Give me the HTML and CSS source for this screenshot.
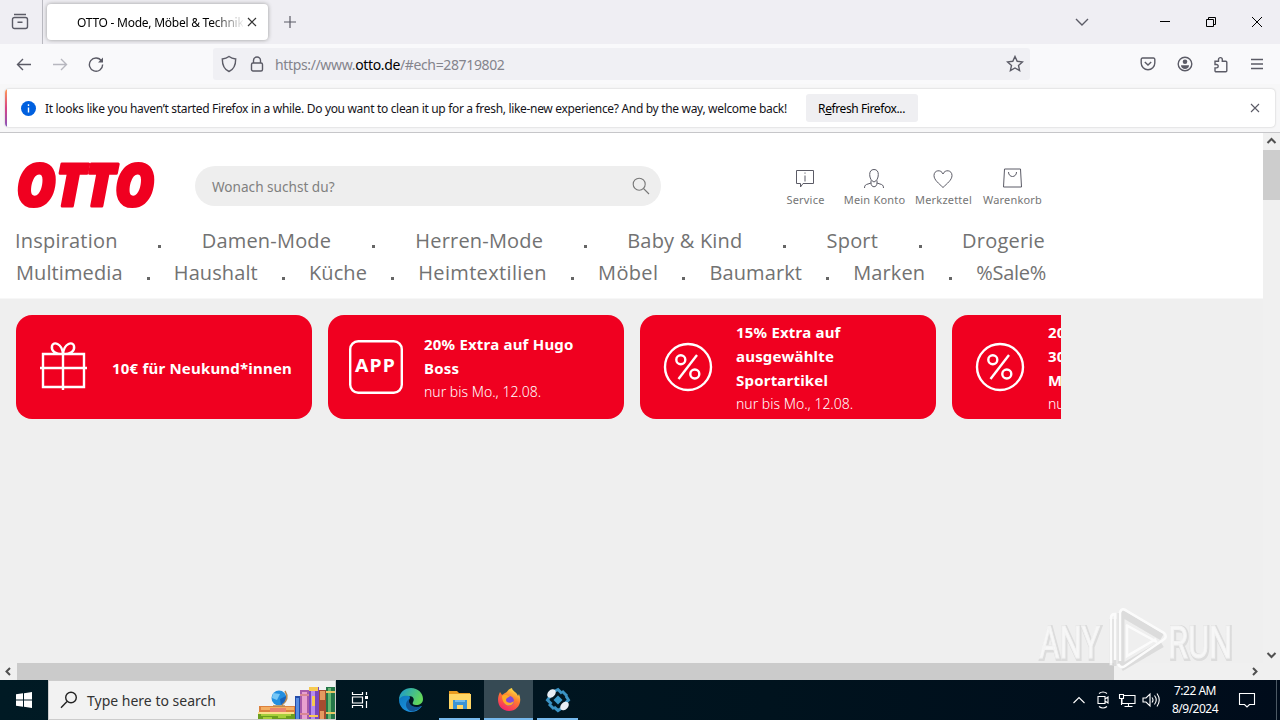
FILE: index.html
```html
<!DOCTYPE html>
<html lang="de">
<head>
<meta charset="utf-8">
<title>OTTO - Mode, Möbel &amp; Technik</title>
<link rel="stylesheet" href="styles.css">
</head>
<body>
<div class="screen">
  <div class="tabs">
    <div class="view"><svg width="18" height="18" viewBox="0 0 18 18"><path d="M3 1.500h12M3.500 4.500h11a2 2 0 0 1 2 2v7a2 2 0 0 1-2 2h-11a2 2 0 0 1-2-2v-7a2 2 0 0 1 2-2zM6.500 9.200h5"/></svg></div>
    <div class="tab"><span class="tab-title">OTTO - Mode, Möbel &amp; Technik</span><svg width="10" height="10" viewBox="0 0 10 10"><path d="M1 1l8 8M9 1L1 9"/></svg></div>
    <svg class="plus" width="14" height="14" viewBox="0 0 14 14"><path d="M7 1v12M1 7h12"/></svg>
    <div class="window-buttons">
      <svg width="14" height="12" viewBox="0 0 14 12"><path d="M1 3l6 6 6-6"/></svg>
      <svg class="dark min" width="12" height="12" viewBox="0 0 12 12"><path d="M1 5.500h10"/></svg>
      <svg class="dark" width="12" height="12" viewBox="0 0 12 12"><path d="M1.500 3.500h7v7h-7zM3.500 3.500v-2h7v7h-2"/></svg>
      <svg class="dark" width="12" height="12" viewBox="0 0 12 12"><path d="M1 1l10 10M11 1L1 11"/></svg>
    </div>
  </div>
  <div class="toolbar">
    <div class="nav-buttons">
      <svg width="16" height="16" viewBox="0 0 16 16"><path d="M15 8.500H1.500M7 3L1.500 8.500 7 14"/></svg>
      <svg class="off" width="16" height="16" viewBox="0 0 16 16"><path d="M1 8.500h13.500M9 3l5.500 5.500L9 14"/></svg>
      <svg width="16" height="16" viewBox="0 0 16 16"><path d="M13.500 5A6.600 6.600 0 1 0 14.600 8.500"/><path class="fill" d="M15 1.500v5H10z"/></svg>
    </div>
    <div class="urlbar">
      <svg width="16" height="18" viewBox="0 0 16 18"><path d="M8 1.500c2 1.600 4.300 2.300 6.700 2.500 0 6-2 10.500-6.700 12.500C3.300 14.500 1.300 10 1.300 4 3.700 3.800 6 3.100 8 1.500z"/></svg>
      <svg width="14" height="16" viewBox="0 0 14 16"><rect x="1.500" y="7" width="11" height="8" rx="1.500"/><path d="M3.500 7V4.500a3.500 3.500 0 0 1 7 0V7"/></svg>
      <span class="url">https://www.<b>otto.de</b>/#ech=28719802</span>
      <svg width="18" height="18" viewBox="0 0 18 18"><path d="M9 1.500l2.200 4.800 5.200.6-3.900 3.500 1.100 5.200L9 13l-4.600 2.600 1.100-5.200L1.600 6.900l5.200-.6z"/></svg>
    </div>
    <div class="tools">
      <svg width="16" height="16" viewBox="0 0 16 16"><path d="M2.500 2h11a1.300 1.300 0 0 1 1.300 1.300V7a6.800 6.800 0 0 1-13.600 0V3.300A1.300 1.300 0 0 1 2.500 2zM4.800 6L8 9l3.200-3"/></svg>
      <svg width="16" height="16" viewBox="0 0 16 16"><circle cx="8" cy="8" r="6.800"/><circle class="fill" cx="8" cy="5.800" r="2.300"/><path class="fill" d="M4 9.300h8c0 5-8 5-8 0z"/></svg>
      <svg width="16" height="17" viewBox="0 0 16 17"><path d="M2 5.200h3.500V3.500a1.900 1.900 0 0 1 3.800 0v1.700h3.500a1 1 0 0 1 1 1v8.500a1 1 0 0 1-1 1H3a1 1 0 0 1-1-1v-2.800h1.500a1.700 1.700 0 0 0 0-3.400H2z"/></svg>
      <svg width="14" height="14" viewBox="0 0 14 14"><path d="M1 2.500h12M1 7h12M1 11.500h12"/></svg>
    </div>
  </div>
  <div class="notice-wrap">
    <div class="notice">
      <i class="stripe"></i>
      <svg class="info" width="15" height="15" viewBox="0 0 15 15"><circle cx="7.500" cy="7.500" r="7.500"/><path d="M7.500 6.500v5M7.500 3.300v1.600"/></svg>
      <span class="message">It looks like you haven’t started Firefox in a while. Do you want to clean it up for a fresh, like-new experience? And by the way, welcome back!</span>
      <span class="refresh">R<u>e</u>fresh Firefox...</span>
      <svg class="dismiss" width="10" height="10" viewBox="0 0 10 10"><path d="M1 1l8 8M9 1L1 9"/></svg>
    </div>
  </div>
  <div class="viewport">
    <main class="page">
      <header class="header">
        <div class="top">
          <svg class="logo" width="144" height="60" viewBox="0 0 144 60"><text x="2.500" y="50" textLength="138" lengthAdjust="spacingAndGlyphs">OTTO</text></svg>
          <div class="search"><span>Wonach suchst du?</span><svg width="18" height="18" viewBox="0 0 18 18"><circle cx="7.200" cy="7.200" r="6"/><path d="M11.500 11.500l5.500 5.500"/></svg></div>
          <div class="actions">
            <div class="action service"><svg width="22" height="22" viewBox="0 0 22 22"><path d="M2.500 3.500h17v13H9L6.500 20v-3.500h-4zM11 8.500v6M11 5.500v1.200"/></svg><span>Service</span></div>
            <div class="action account"><svg width="22" height="22" viewBox="0 0 22 22"><path d="M11 2.500c-3 0-4.300 2-4.300 5 0 3.500 1.500 6.500 4.300 7.500 2.800-1 4.300-4 4.300-7.500 0-3-1.300-5-4.300-5zM1.500 21c0-3 1.500-3.500 3.500-4l3-1v-2.500M20.500 21c0-3-1.500-3.500-3.500-4l-3-1v-2.500M8 16c0 5 6 5 6 0"/></svg><span>Mein Konto</span></div>
            <div class="action wish"><svg width="22" height="22" viewBox="0 0 22 22"><path d="M11 20.500C7 16.500 2 13 2 8.500c0-5.500 7-6.500 9-1.500 2-5 9-4 9 1.500 0 4.500-5 8-9 12z"/></svg><span>Merkzettel</span></div>
            <div class="action cart"><svg width="22" height="22" viewBox="0 0 22 22"><path d="M3.500 2h16l1 18h-18zM7.500 5c0 6 8 6 8 0"/></svg><span>Warenkorb</span></div>
          </div>
        </div>
        <nav class="menu first"><span>Inspiration</span><i></i><span>Damen-Mode</span><i></i><span>Herren-Mode</span><i></i><span>Baby &amp; Kind</span><i></i><span>Sport</span><i></i><span>Drogerie</span></nav>
        <nav class="menu"><span>Multimedia</span><i></i><span>Haushalt</span><i></i><span>Küche</span><i></i><span class="wide">Heimtextilien</span><i></i><span class="wide">Möbel</span><i></i><span>Baumarkt</span><i></i><span>Marken</span><i></i><span class="sale">%Sale%</span></nav>
      </header>
      <section class="promos">
        <article class="promo"><svg width="56" height="56" viewBox="0 0 56 56"><path d="M7 15h41v33H7zM4 29h47M27 15v36M27 15C19 15 15 12 16 7c1-5 10-3 11 8 1-11 10-13 11-8 1 5-3 8-11 8"/></svg><div class="copy"><b>10€ für Neukund*innen</b></div></article>
        <article class="promo"><svg width="56" height="56" viewBox="0 0 56 56"><rect x="2.200" y="2.200" width="51.600" height="51.600" rx="8"/><text x="7" y="32.500" textLength="41" lengthAdjust="spacingAndGlyphs">APP</text></svg><div class="copy"><b>20% Extra auf Hugo Boss</b><span>nur bis Mo., 12.08.</span></div></article>
        <article class="promo"><svg width="56" height="56" viewBox="0 0 56 56"><circle cx="28" cy="28" r="23"/><circle cx="20.800" cy="20.800" r="4.500"/><circle cx="34.800" cy="35" r="4.500"/><path d="M37 16L18.500 40"/></svg><div class="copy"><b>15% Extra auf ausgewählte Sportartikel</b><span>nur bis Mo., 12.08.</span></div></article>
        <article class="promo"><svg width="56" height="56" viewBox="0 0 56 56"><circle cx="28" cy="28" r="23"/><circle cx="20.800" cy="20.800" r="4.500"/><circle cx="34.800" cy="35" r="4.500"/><path d="M37 16L18.500 40"/></svg><div class="copy"><b>20%<br>30%<br>Mode</b><span>nur bis Mo.</span></div></article>
      </section>
    </main>
    <div class="vscroll">
      <svg width="17" height="17" viewBox="0 0 17 17"><path d="M4.500 10l4-4 4 4"/></svg><div class="vthumb"></div>
      <svg width="17" height="17" viewBox="0 0 17 17"><path d="M4.500 7l4 4 4-4"/></svg>
    </div>
  </div>
  <div class="hscroll">
    <svg width="17" height="17" viewBox="0 0 17 17"><path d="M10 5L6.500 8.500 10 12"/></svg><div class="hthumb"></div>
    <svg class="right" width="17" height="17" viewBox="0 0 17 17"><path d="M6 5l3.500 3.500L6 12"/></svg>
  </div>
  <div class="taskbar">
    <div class="start"><svg width="16" height="16" viewBox="0 0 16 16"><path d="M0 2.300l7-1v6.200H0zM8 1.200L16 0v7.500H8zM0 8.500h7v6.300l-7-1zM8 8.500h8V16l-8-1.200z"/></svg></div>
    <div class="tasksearch">
      <svg class="lens" width="18" height="18" viewBox="0 0 18 18"><circle cx="11" cy="6.500" r="5.300"/><path d="M7 10.500L1 16.800"/></svg>
      <span>Type here to search</span>
      <svg class="books" width="77" height="38" viewBox="0 0 77 38">
        <path fill="#6b9f1e" d="M0 33h37v5H0z"/><path fill="#a7cf3a" d="M3 33h30v2H3zM5 36h9v2H5zM20 35h8v2h-8z"/><path fill="#dc813e" d="M1 25h36v8H1z"/><path fill="#f4ae62" d="M3 26h33v3H3z"/><path fill="#e7836f" d="M12 27h16v4H12z"/><path fill="#fbe08a" d="M0 31h36v2H0z"/>
        <circle cx="21" cy="17" r="7.500" fill="#238fe0"/><path fill="#76c7f6" d="M15 12l7 1-3 6-5-2z"/><path fill="#1764bd" d="M22 18l6-3v5l-5 4z"/><path d="M27 10q5 8-3 14M15 25h12" fill="none" stroke="#b78a55" stroke-width="1.500"/>
        <path fill="#234ca9" d="M37 15h6v23h-6z"/><path fill="#578ce0" d="M38 17h3v21h-3z"/>
        <path fill="#a85aa9" d="M42 9h10v29H42z"/><path fill="#e8a0cf" d="M44 11h5v27h-5z"/><path fill="#d98794" d="M42 13h9v2h-9zM42 32h9v2h-9z"/>
        <path fill="#7948bd" d="M51 6h10v32H51z"/><path fill="#b68cec" d="M53 7h4v31h-4z"/><path fill="#f6ca51" d="M51 6h9v4h-9zM54 15h3v10h-3zM51 34h9v2h-9z"/>
        <path fill="#a64b30" d="M61 9h7v29h-7z"/><path fill="#e49a60" d="M62 10h5v9h-5zM62 30h4v8h-4z"/><path fill="#257648" d="M68 6h9v32h-9z"/><path fill="#68b872" d="M70 7h3v31h-3z"/><path fill="#e8c665" d="M68 10h9v2h-9zM68 31h9v2h-9z"/>
      </svg>
    </div>
    <div class="task"><svg class="line" width="18" height="18" viewBox="0 0 18 18"><path d="M1.500 1v2.500h10V1M1.500 17v-2.500h10V17M1.500 6h10v6h-10zM15.500 1v3M15.500 10v7"/><path class="fill" d="M14 5h3v3h-3z"/></svg></div>
    <div class="task edge"><svg width="26" height="26" viewBox="0 0 26 26"><defs><linearGradient id="e1" x2="1" y2=".4"><stop stop-color="#1795d6"/><stop offset="1" stop-color="#62d75b"/></linearGradient><linearGradient id="e2" x2=".8" y2="1"><stop stop-color="#0c78be"/><stop offset="1" stop-color="#2096e4"/></linearGradient></defs><path fill="url(#e2)" d="M1 13c0 7 6 12 12 12 5 0 9-3 11-6-9 4-16-2-12-8 0-5-10-6-11 2z"/><path fill="#125494" d="M11 12c-7 6 0 14 5 12 4-1 6-3 8-5-8 3-14-1-13-7z"/><path fill="url(#e1)" d="M1 13C1 5 7 1 13 1c7 0 12 5 12 11 0 4-3 6-7 6-3 0-4-1-3-3 2-3 0-6-4-6C7 8 2 9 1 13z"/></svg></div>
    <div class="task open"><svg width="22" height="20" viewBox="0 0 22 20"><path fill="#e99c20" d="M0 1h8l2 2h11v5H0z"/><path fill="#ffd665" d="M0 4h22v15H0z"/><path fill="#3a94d5" d="M4 19v-9h14v9h-4v-4H8v4z"/><path fill="#70bbed" d="M6 10h10v2H6z"/></svg></div>
    <div class="task open active"><svg width="24" height="24" viewBox="0 0 24 24"><defs><linearGradient id="f1" x1=".8" x2=".3" y2="1"><stop stop-color="#fff147"/><stop offset=".45" stop-color="#ff7b2e"/><stop offset="1" stop-color="#f4236c"/></linearGradient></defs><path fill="url(#f1)" d="M3 4l2 3 3-2c2 0 3-4 7-5 0 3 5 4 6 8l1-2c4 9-2 17-10 17C3 23-2 14 3 4z"/><circle cx="12" cy="13" r="5" fill="#8148d9"/><path fill="#ffab24" d="M5 8c4-3 7 0 8 1-3 0-4 2-4 3 0 3 5 4 8 1-2 8-12 5-12-5z"/></svg></div>
    <div class="task open"><svg width="26" height="26" viewBox="0 0 26 26"><path d="M13 8.500l4.500 4.500-4.500 4.500L8.500 13z" fill="#3a9acb"/><path d="M10 4l3-1.500 4 4M17 4l5 5M21 9l2.500 4-3 3M5 9.500L2.500 13l4 4M4 17l5 5M9 20l4 3.500 3-2" fill="none" stroke="#3a93c4" stroke-width="3"/><ellipse cx="6.500" cy="6.500" rx="5" ry="3.500" transform="rotate(-45 6.500 6.500)" fill="#e7edf4"/><ellipse cx="19.500" cy="19" rx="5" ry="3.500" transform="rotate(-45 19.500 19)" fill="#e7edf4"/></svg></div>
    <div class="tray">
      <svg width="12" height="16" viewBox="0 0 12 16"><path d="M.5 11L6 5.500l5.500 5.500"/></svg>
      <svg width="14" height="18" viewBox="0 0 14 18"><path d="M2 5.500h7v7H2zM9 8l3-2v6l-3-2M3 2.500q4-3 8 0M3 15.500q4 3 8 0"/></svg>
      <svg width="18" height="16" viewBox="0 0 18 16"><path d="M6 3.500h11v8H4V7M1.500 2.500h4v4h-4zM3.500 7v6M10.500 11.500v3M6.500 14.500h8"/></svg>
      <svg width="18" height="16" viewBox="0 0 18 16"><path d="M1 6h3l4-4v12L4 10H1zM10 5.500q2 2.500 0 5M12.500 3.500q3.500 4.500 0 9M15 1.500q4.500 6.500 0 13"/></svg>
      <div class="clock"><span>7:22 AM</span><span>8/9/2024</span></div>
      <svg width="18" height="18" viewBox="0 0 18 18"><path d="M1.500 2.500h15v11h-5L9 16l-2.500-2.500h-5z"/></svg>
      <i class="peek"></i>
    </div>
  </div>
  <svg class="watermark" width="210" height="70" viewBox="0 0 210 70">
    <g class="shadow"><text x="8" y="53" textLength="61" lengthAdjust="spacingAndGlyphs">ANY</text><text x="137" y="53" textLength="64" lengthAdjust="spacingAndGlyphs">RUN</text></g>
    <path class="tri-shadow" d="M81 13v47M89 7v51M89 7l41 24M89 62l41-24"/>
    <path class="tri" d="M79 59V12q0-4 4-4v46M88 6v49M88 6q2-5 7-1l37 22q4 4-1 7L93 60q-4 3-7-2M94 19l31 17M95 20v30l29-17"/>
    <g class="words"><text x="7" y="52" textLength="61" lengthAdjust="spacingAndGlyphs">ANY</text><text x="136" y="52" textLength="64" lengthAdjust="spacingAndGlyphs">RUN</text></g>
  </svg>
</div>
</body>
</html>
```
FILE: styles.css
```css
* { box-sizing: border-box; }
body { margin: 0; font-family: "Noto Sans", "Open Sans", sans-serif; overflow: hidden; }
svg { display: block; flex: none; fill: none; stroke: #5b5b66; stroke-width: 1.4; }
svg .fill { fill: #5b5b66; stroke: none; }
.screen { position: relative; width: 1280px; height: 720px; display: flex; flex-direction: column; overflow: hidden; background: #efefef; }
.tabs { height: 44px; background: #efeef3; display: flex; align-items: center; flex: none; }
.view { width: 43px; height: 44px; border-right: 1px solid #b9b9c0; display: flex; align-items: center; padding-left: 11px; }
.tab { width: 221px; height: 36px; margin-left: 4px; border-radius: 4px; background: #fff; box-shadow: 0 0 4px #999; display: flex; align-items: center; padding-left: 30px; }
.tab-title { width: 166px; overflow: hidden; white-space: nowrap; font-size: 12px; letter-spacing: -.25px; -webkit-mask-image: linear-gradient(90deg, #000 135px, transparent 168px); mask-image: linear-gradient(90deg, #000 135px, transparent 168px); }
.tab svg { margin-left: 4px; stroke: #333; stroke-width: 1.2; }
.plus { margin-left: 15px; stroke-width: 1.2; }
.window-buttons { margin-left: auto; display: flex; align-items: center; gap: 34px; padding-right: 17px; }
.window-buttons .min { margin-left: 36px; }
.dark { stroke: #000; stroke-width: 1; }
.toolbar { height: 40px; background: #f9f9fb; display: flex; align-items: center; flex: none; }
.nav-buttons { width: 213px; padding-left: 16px; display: flex; gap: 20px; }
.off { stroke: #b7b7bf; }
.urlbar { width: 817px; height: 32px; background: #f0f0f4; border-radius: 3px; display: flex; align-items: center; padding-left: 8px; }
.urlbar svg:nth-child(2) { margin-left: 13px; }
.url { margin-left: 11px; width: 731px; font-size: 14px; letter-spacing: -.36px; color: #84848c; padding-top: 1px; }
.url b { font-weight: 400; color: #000; }
.tools { display: flex; align-items: center; gap: 20.500px; margin-left: 110px; }
.notice-wrap { height: 49px; padding: 5px 5px 0 5px; background: #f7f7f8; border-bottom: 1px solid #c6c6c9; flex: none; }
.notice { height: 38px; background: #fff; border-radius: 4px; box-shadow: 0 0 2px #bbb; display: flex; align-items: center; overflow: hidden; }
.stripe { width: 2px; height: 38px; background: linear-gradient(#ff9b55, #d74386, #8755ba); }
.info { margin-left: 14px; stroke: #fff; }
.info circle { fill: #0060df; stroke: none; }
.message { width: 743px; margin-left: 9px; white-space: nowrap; font-size: 12px; letter-spacing: -.322px; color: #15141a; padding-top: 1px; }
.refresh { width: 112px; height: 28px; margin-left: 18px; background: #efeff2; border-radius: 3px; font-size: 12px; line-height: 29px; text-align: center; letter-spacing: -.4px; padding-right: 1px; }
.dismiss { margin-left: auto; margin-right: 15px; stroke-width: 1.1; }
.viewport { height: 530px; display: flex; flex: none; }
.page { width: 1263px; overflow: hidden; }
.header { height: 166px; background: #fff; border-bottom: 1px solid #f7f7f7; }
.top { height: 92px; display: flex; align-items: center; padding: 14px 0 0 14px; }
.logo { overflow: visible; }
.logo text { font: italic 800 58px "Open Sans"; fill: #f00020; stroke: #f00020; stroke-width: 3.200; stroke-linejoin: round; }
.search { width: 466px; height: 40px; margin-left: 37px; border-radius: 20px; background: #eee; display: flex; align-items: center; justify-content: space-between; padding: 0 11px 0 17px; font-size: 13.600px; color: #808080; }
.search span { padding-top: 1px; }
.search svg { stroke: #777; stroke-width: 1.1; }
.actions { display: flex; margin-left: 110px; margin-top: 4px; }
.action { display: flex; flex-direction: column; align-items: center; width: 69px; font-size: 11px; line-height: 21px; letter-spacing: .2px; color: #757575; white-space: nowrap; }
.action svg { stroke-width: 1; margin-right: 1px; }
.menu { width: 1030px; height: 32px; margin-left: 16px; display: flex; align-items: center; justify-content: space-between; font: 400 20px/32px "Open Sans", sans-serif; letter-spacing: .1px; color: #727272; white-space: nowrap; }
.menu .wide { letter-spacing: .35px; }
.menu .sale { letter-spacing: -.3px; }
.first { width: 1030px; margin-left: 15px; letter-spacing: .2px; }
.menu i { width: 3px; height: 3px; margin-top: 11px; background: #666; }
.promos { width: 1061px; height: 120px; overflow: hidden; display: flex; gap: 16px; padding: 16px 0 0 16px; }
.promo { width: 296px; height: 104px; flex: none; border-radius: 16px; background: #f00020; color: #fff; display: flex; align-items: center; gap: 20px; padding: 0 12px 0 20px; }
.promo svg { stroke: #fff; stroke-width: 2.400; }
.promo text { font: 700 17px "Noto Sans"; letter-spacing: 1px; fill: #fff; stroke: none; }
.copy { display: flex; flex-direction: column; width: 184px; font-size: 14px; line-height: 24px; font-weight: 300; padding-top: 2px; }
.copy b { font-weight: 700; font-size: 15px; letter-spacing: .2px; padding-right: 20px; }
.promo:first-child .copy b { padding-right: 0; white-space: nowrap; }
.promo:nth-child(4) .copy { white-space: nowrap; }
.vscroll { width: 17px; background: #f0f0f0; display: flex; flex-direction: column; }
.vscroll svg, .hscroll svg { stroke: #505050; stroke-width: 2; }
.vthumb { width: 17px; height: 50px; background: #cdcdcd; margin-bottom: auto; }
.hscroll { height: 17px; background: #f0f0f0; display: flex; flex: none; }
.hthumb { width: 1097px; background: #cbcbcb; }
.right { margin-left: auto; margin-right: 16px; }
.taskbar { height: 40px; background: linear-gradient(90deg, #001a24, #00131e 60%, #000c1b); display: flex; color: #fff; }
.start { width: 48px; display: flex; align-items: center; justify-content: center; }
.start svg { fill: #fff; stroke: none; }
.tasksearch { width: 288px; background: #f2f2f2; border: 1px solid #ccc; display: flex; align-items: center; padding-left: 11px; color: #333; font-size: 14px; overflow: hidden; }
.tasksearch .lens { stroke: #222; }
.tasksearch span { width: 173px; margin-left: 9px; padding-top: 1px; white-space: nowrap; }
.books { stroke: none; }
.task { width: 48px; display: flex; align-items: center; justify-content: center; }
.task svg { stroke: none; }
.task .line { stroke: #fff; stroke-width: 1.2; }
.task .line .fill { fill: #fff; }
.edge { width: 51px; padding-left: 3px; }
.open { width: 49px; box-shadow: inset 0 -2px #76b9ed; border-left: 4px solid transparent; border-right: 4px solid transparent; background-clip: padding-box; }
.active { border: 0; background: #364a54; }
.tray { margin-left: auto; display: flex; align-items: center; }
.tray svg { stroke: #fff; stroke-width: 1.1; margin-right: 11px; }
.tray > svg:nth-child(2) { margin-right: 8px; }
.tray > svg:nth-child(3) { margin-right: 6px; }
.tray > svg:nth-child(4) { margin-right: 3px; }
.tray > svg:nth-child(6) { margin-right: 20px; }
.clock { width: 64px; margin-right: 11px; display: flex; flex-direction: column; text-align: center; font-size: 12px; line-height: 18px; letter-spacing: -.5px; }
.peek { width: 1px; height: 40px; margin-right: 3px; background: #4c5964; }
.watermark { position: absolute; left: 1032px; top: 606px; opacity: .8; }
.watermark text { font: 400 44px "Roboto"; }
.shadow text { fill: #d2d2d2; stroke: #d8d8d8; stroke-width: 4; }
.words text { fill: #f9f9f9; stroke: #f4f4f4; stroke-width: 1; }
.tri { stroke: #fff; stroke-width: 2.500; }
.tri-shadow { stroke: #d8d8d8; stroke-width: 7; }
```
